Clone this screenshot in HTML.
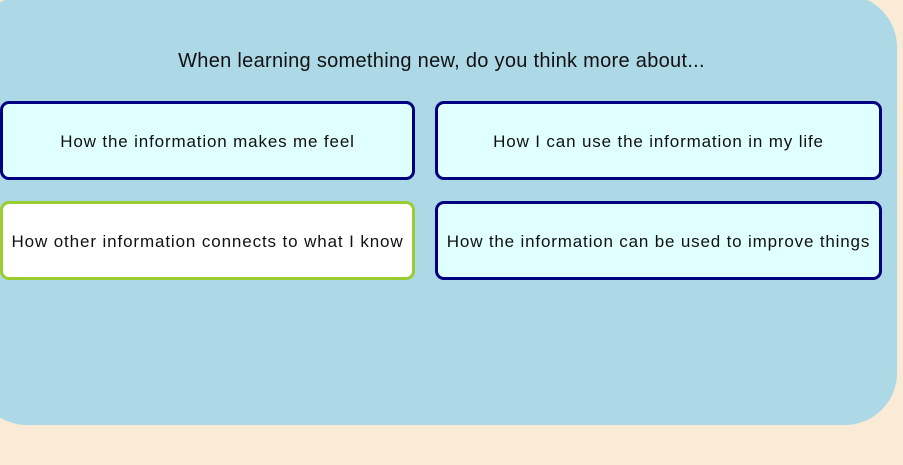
<!DOCTYPE html>
<html><head><style>
html,body{margin:0;padding:0;width:903px;height:465px;overflow:hidden;background:#faebd7;font-family:"Liberation Sans",sans-serif;}
.panel{position:absolute;left:-25px;top:-5px;width:922px;height:430px;background:#add8e6;border-radius:52px;}
.title{position:absolute;left:0;width:883px;top:50px;text-align:center;font-size:20px;letter-spacing:0.3px;color:#111;}
.b{position:absolute;box-sizing:border-box;height:79px;border:3px solid #000080;border-radius:9px;background:#e0ffff;display:flex;align-items:center;justify-content:center;font-size:17px;letter-spacing:0.85px;color:#111;white-space:nowrap;padding-top:2px;}
.g{border-color:#9acd32;background:#fff;}
</style></head><body>
<div class="panel"></div>
<div class="title">When learning something new, do you think more about...</div>
<div class="b" style="left:0;top:101px;width:415px">How the information makes me feel</div>
<div class="b" style="left:435px;top:101px;width:447px">How I can use the information in my life</div>
<div class="b g" style="left:0;top:201px;width:415px;letter-spacing:0.88px">How other information connects to what I know</div>
<div class="b" style="left:435px;top:201px;width:447px;letter-spacing:0.83px">How the information can be used to improve things</div>
</body></html>
